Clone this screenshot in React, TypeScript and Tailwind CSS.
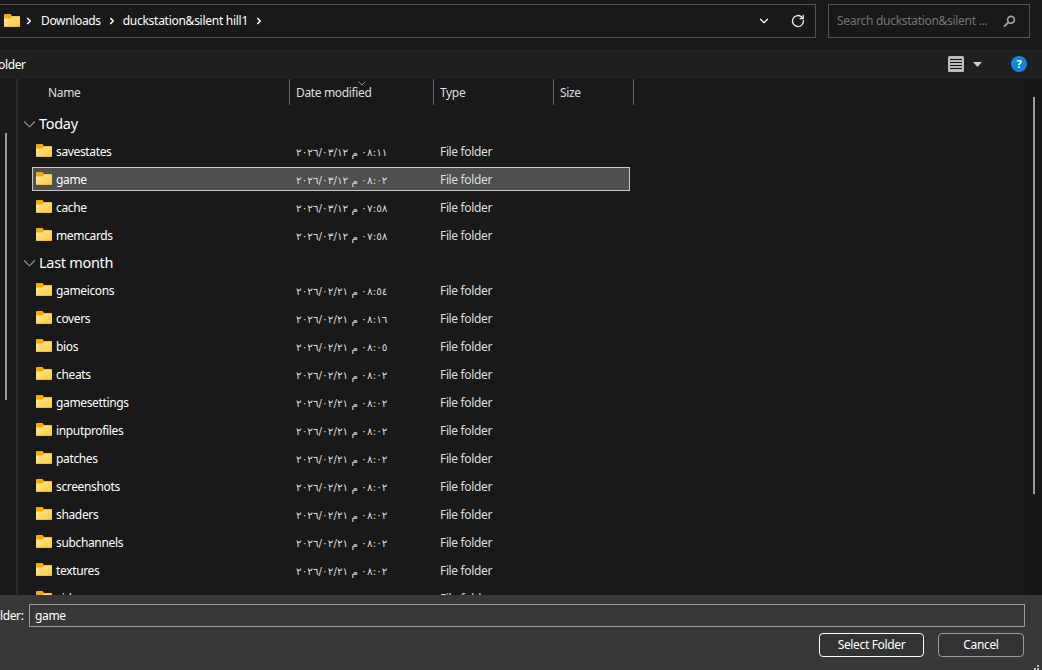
import { ChevronDown, ChevronRight } from 'lucide-react';

interface Entry {
  name: string;
  date: string;
}

interface Group {
  label: string;
  entries: Entry[];
}

const groups: Group[] = [
  {
    label: 'Today',
    entries: [
      { name: 'savestates', date: '٢٠٢٦/٠٣/١٢ م ٠٨:١١' },
      { name: 'game', date: '٢٠٢٦/٠٣/١٢ م ٠٨:٠٢' },
      { name: 'cache', date: '٢٠٢٦/٠٣/١٢ م ٠٧:٥٨' },
      { name: 'memcards', date: '٢٠٢٦/٠٣/١٢ م ٠٧:٥٨' },
    ],
  },
  {
    label: 'Last month',
    entries: [
      { name: 'gameicons', date: '٢٠٢٦/٠٢/٢١ م ٠٨:٥٤' },
      { name: 'covers', date: '٢٠٢٦/٠٢/٢١ م ٠٨:١٦' },
      { name: 'bios', date: '٢٠٢٦/٠٢/٢١ م ٠٨:٠٥' },
      { name: 'cheats', date: '٢٠٢٦/٠٢/٢١ م ٠٨:٠٢' },
      { name: 'gamesettings', date: '٢٠٢٦/٠٢/٢١ م ٠٨:٠٢' },
      { name: 'inputprofiles', date: '٢٠٢٦/٠٢/٢١ م ٠٨:٠٢' },
      { name: 'patches', date: '٢٠٢٦/٠٢/٢١ م ٠٨:٠٢' },
      { name: 'screenshots', date: '٢٠٢٦/٠٢/٢١ م ٠٨:٠٢' },
      { name: 'shaders', date: '٢٠٢٦/٠٢/٢١ م ٠٨:٠٢' },
      { name: 'subchannels', date: '٢٠٢٦/٠٢/٢١ م ٠٨:٠٢' },
      { name: 'textures', date: '٢٠٢٦/٠٢/٢١ م ٠٨:٠٢' },
      { name: 'videos', date: '٢٠٢٦/٠٢/٢١ م ٠٨:٠٢' },
    ],
  },
];

function FolderIcon() {
  return (
    <svg width="16" height="14" viewBox="0 0 16 14" className="shrink-0">
      <defs>
        <linearGradient id="folder" x1="0" y1="0" x2="1" y2="1">
          <stop offset="0" stopColor="#ffe79c" />
          <stop offset="1" stopColor="#ffc937" />
        </linearGradient>
      </defs>
      <path d="M0 1Q0 0 1 0H6.6L8 2H15Q16 2 16 3V9H0Z" fill="#f5ab08" />
      <path d="M0 4.4H6.4L8.2 2.6H15.2Q16 2.6 16 3.4V12Q16 13 15 13H1Q0 13 0 12Z" fill="url(#folder)" />
      <path d="M.4 12.6Q.6 13 1 13H15Q15.4 13 15.7 12.6Z" fill="#e9a820" />
    </svg>
  );
}

function Row({ entry, selected }: { entry: Entry; selected: boolean }) {
  return (
    <div className="h-7 shrink-0 pt-px pb-[3px]">
      <div
        className={`ml-[14px] w-[598px] h-6 flex items-center border ${
          selected ? 'bg-[#4f4f4f] border-[#c8c8c8]' : 'border-transparent'
        }`}
      >
        <div className="w-[263px] pl-[3px] flex items-center gap-1 text-white">
          <FolderIcon />
          <span className="pt-[2px]">{entry.name}</span>
        </div>
        <bdo
          dir="ltr"
          className="w-36 pt-[3px] text-[#dedede] text-[10.5px] tracking-normal whitespace-nowrap [font-family:'DejaVu_Sans',sans-serif]"
        >
          {entry.date}
        </bdo>
        <span className="pt-[2px] text-[#dedede]">File folder</span>
      </div>
    </div>
  );
}

function GroupHeader({ label }: { label: string }) {
  return (
    <div className="h-7 shrink-0 pl-1 flex items-center gap-[2px]">
      <svg width="15" height="14" viewBox="0 0 15 14" fill="none" stroke="#9a9a9a" strokeWidth="1.1">
        <path d="M2.2 4.5L7.5 9.8L12.8 4.5" />
      </svg>
      <span className="text-[14.5px] tracking-[-0.3px] text-white">{label}</span>
    </div>
  );
}

function AddressBar() {
  return (
    <div className="h-[49px] shrink-0 flex pt-1 pr-3">
      <div className="flex-1 h-[34px] border border-l-0 border-[#535353] flex items-center pl-1 text-white">
        <FolderIcon />
        <ChevronRight size={10} strokeWidth={4} className="ml-1" />
        <span className="ml-[7px]">Downloads</span>
        <ChevronRight size={10} strokeWidth={4} className="ml-[6px]" />
        <span className="ml-[6px] tracking-[-0.27px]">duckstation&amp;silent hill1</span>
        <ChevronRight size={10} strokeWidth={4} className="ml-[6px]" />
        <ChevronDown size={14} strokeWidth={2} className="ml-auto" />
        <svg width="14" height="14" viewBox="0 0 14 14" className="ml-5 mr-[10px]" fill="none" stroke="#e6e6e6" strokeWidth="1.3">
          <path d="M12.4 6.2A5.5 5.5 0 1 1 10.2 2.6L12 4.2" />
          <path d="M12.2 .8V4.5H8.6" />
        </svg>
      </div>
      <div className="ml-3 w-[202px] h-[34px] border border-[#535353] flex items-center pl-2 pr-[13px] justify-between">
        <span className="text-[#757575] tracking-[-0.3px]">Search duckstation&amp;silent ...</span>
        <svg width="13" height="13" viewBox="0 0 13 13" fill="none" stroke="#a0a0a0">
          <circle cx="8" cy="4.7" r="3.4" strokeWidth="1.7" />
          <path d="M5.4 7.3L1 11.7" strokeWidth="1.9" />
        </svg>
      </div>
    </div>
  );
}

function Toolbar() {
  return (
    <div className="h-[30px] shrink-0 bg-[#202020] flex items-center pr-[15px] text-white">
      <span className="-ml-[2px] pt-px">older</span>
      <svg width="16" height="16" viewBox="0 0 16 16" className="ml-auto">
        <rect width="16" height="16" rx="1.5" fill="#bcbcbc" />
        <path d="M2 3.5H14M2 6.5H14M2 9.5H14M2 12.5H14" stroke="#111" />
      </svg>
      <svg width="9" height="5" viewBox="0 0 9 5" className="ml-[9px]">
        <path d="M0 0H9L4.5 5Z" fill="#d0d0d0" />
      </svg>
      <div className="ml-[29px] size-4 rounded-full bg-[#1187dc] flex items-center justify-center text-[11px] font-bold">
        ?
      </div>
    </div>
  );
}

function ColumnHeaders() {
  return (
    <div className="h-[26px] shrink-0 flex text-[#dedede] leading-[28px] pl-[30px]">
      <div className="w-[242px] border-r border-[#636363]">Name</div>
      <div className="relative w-36 pl-[6px] border-r border-[#636363]">
        Date modified
        <svg width="8" height="5" viewBox="0 0 8 5" className="absolute left-[68px] top-[2px]" fill="none" stroke="#8a8a8a">
          <path d="M.6 .6L4 4L7.4 .6" />
        </svg>
      </div>
      <div className="w-[120px] pl-[6px] border-r border-[#636363]">Type</div>
      <div className="w-20 pl-[6px] border-r border-[#636363]">Size</div>
    </div>
  );
}

export default function App() {
  return (
    <div className="w-[1042px] h-[670px] overflow-hidden flex flex-col bg-[#191919] text-[12px] tracking-[-0.35px] whitespace-nowrap [font-family:'Noto_Sans',sans-serif]">
      <AddressBar />
      <Toolbar />
      <div className="flex-1 min-h-0 flex">
        <div className="w-[18px] shrink-0 border-r-2 border-[#2b2b2b] pl-[5px] pt-[54px]">
          <div className="w-[2px] h-[267px] bg-[#9a9a9a]" />
        </div>
        <div className="flex-1 min-w-0 overflow-hidden flex flex-col">
          <ColumnHeaders />
          <div className="mt-[5px] flex flex-col min-h-0 overflow-hidden">
            {groups.map((group) => (
              <div key={group.label} className="shrink-0 -mb-px">
                <GroupHeader label={group.label} />
                {group.entries.map((entry) => (
                  <Row key={entry.name} entry={entry} selected={entry.name === 'game'} />
                ))}
              </div>
            ))}
          </div>
        </div>
        <div className="w-[17px] shrink-0 bg-[#171717] pl-2 pt-[18px]">
          <div className="w-[2px] h-[397px] bg-[#9a9a9a]" />
        </div>
      </div>
      <div className="relative h-[75px] shrink-0 bg-[#383838] pt-[9px] pr-[17px] text-white">
        <div className="flex items-center">
          <span className="w-[35px] shrink-0 -ml-[7px] pt-px">older:</span>
          <div className="ml-px flex-1 h-[23px] border border-[#9b9b9b] pl-[5px] leading-[21px]">game</div>
        </div>
        <div className="mt-[6px] pr-px flex justify-end gap-[14px]">
          <button className="w-[105px] h-6 rounded border border-white bg-[#333333]">Select Folder</button>
          <button className="w-[86px] h-6 rounded border border-[#9b9b9b] bg-[#333333]">Cancel</button>
        </div>
        <svg width="6" height="6" viewBox="0 0 6 6" className="absolute right-[2px] bottom-0" fill="#bdbdbd">
          <path d="M3 1h2v2h-2zM0 4h2v2h-2zM3 4h2v2h-2z" />
        </svg>
      </div>
    </div>
  );
}
